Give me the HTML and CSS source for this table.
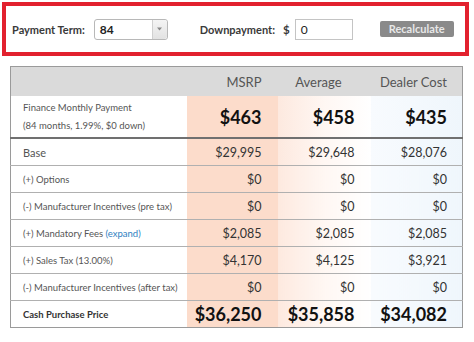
FILE: index.html
```html
<!DOCTYPE html>
<html>
<head>
<meta charset="utf-8">
<link rel="stylesheet" href="styles.css">
</head>
<body>
<div class="controls">
  <span class="ctl-label">Payment Term:</span>
  <div class="select">
    <span class="select-value">84</span>
    <span class="select-arrow"><svg width="5" height="4" viewBox="0 0 5 4"><path d="M0 0.5H5L2.5 3.5Z" fill="#888"/></svg></span>
  </div>
  <span class="ctl-label dp-label">Downpayment:</span>
  <span class="dollar">$</span>
  <div class="text-input">0</div>
  <button class="btn">Recalculate</button>
</div>

<table class="price-table">
  <colgroup>
    <col class="c-label"><col class="c-msrp"><col class="c-avg"><col class="c-dealer">
  </colgroup>
  <thead>
    <tr>
      <th></th>
      <th class="h-msrp">MSRP</th>
      <th class="h-avg">Average</th>
      <th class="h-dealer">Dealer Cost</th>
    </tr>
  </thead>
  <tbody>
    <tr class="finance">
      <td class="label">Finance Monthly Payment<br>(84 months, 1.99%, $0 down)</td>
      <td class="msrp big">$463</td>
      <td class="avg big">$458</td>
      <td class="dealer big">$435</td>
    </tr>
    <tr>
      <td class="label base">Base</td>
      <td class="msrp">$29,995</td>
      <td class="avg">$29,648</td>
      <td class="dealer">$28,076</td>
    </tr>
    <tr>
      <td class="label">(+) Options</td>
      <td class="msrp">$0</td>
      <td class="avg">$0</td>
      <td class="dealer">$0</td>
    </tr>
    <tr>
      <td class="label">(-) Manufacturer Incentives (pre tax)</td>
      <td class="msrp">$0</td>
      <td class="avg">$0</td>
      <td class="dealer">$0</td>
    </tr>
    <tr>
      <td class="label">(+) Mandatory Fees <a class="expand">(expand)</a></td>
      <td class="msrp">$2,085</td>
      <td class="avg">$2,085</td>
      <td class="dealer">$2,085</td>
    </tr>
    <tr>
      <td class="label">(+) Sales Tax (13.00%)</td>
      <td class="msrp">$4,170</td>
      <td class="avg">$4,125</td>
      <td class="dealer">$3,921</td>
    </tr>
    <tr>
      <td class="label">(-) Manufacturer Incentives (after tax)</td>
      <td class="msrp">$0</td>
      <td class="avg">$0</td>
      <td class="dealer">$0</td>
    </tr>
    <tr class="total">
      <td class="label strong">Cash Purchase Price</td>
      <td class="msrp big">$36,250</td>
      <td class="avg big">$35,858</td>
      <td class="dealer big">$34,082</td>
    </tr>
  </tbody>
</table>
</body>
</html>
```

FILE: styles.css
```css
html, body {
  margin: 0;
  padding: 0;
  background: #fff;
  font-family: Lato, "Open Sans", sans-serif;
}

.controls {
  margin: 2px 5px 0 2px;
  height: 46px;
  border: 4px solid #e2212e;
  display: flex;
  align-items: center;
  padding-left: 6px;
}

.ctl-label {
  font-size: 11px;
  font-weight: 700;
  color: #3a3a3a;
  white-space: nowrap;
  flex-shrink: 0;
}

.select {
  margin-left: 9px;
  width: 72px;
  height: 19px;
  border: 1px solid #b8b8b8;
  border-radius: 3px;
  display: flex;
  background: #fff;
  flex-shrink: 0;
}

.select-value {
  flex: 1;
  font-size: 12px;
  font-weight: 700;
  color: #222;
  padding-left: 5px;
  line-height: 19px;
}

.select-arrow {
  width: 14px;
  border-left: 1px solid #d0d0d0;
  background: linear-gradient(#f4f4f4, #e2e2e2);
  border-radius: 0 3px 3px 0;
  display: flex;
  align-items: center;
  justify-content: center;
}

.dp-label {
  margin-left: 32px;
}

.dollar {
  margin-left: 8px;
  font-size: 11.5px;
  font-weight: 700;
  color: #3a3a3a;
}

.text-input {
  margin-left: 5px;
  width: 51px;
  height: 19px;
  border: 1px solid #c4c4c4;
  font-size: 12px;
  color: #222;
  line-height: 19px;
  padding-left: 5px;
  flex-shrink: 0;
}

.btn {
  margin-left: 27px;
  width: 74px;
  height: 16px;
  border: none;
  border-radius: 2px;
  background: #8a8a8a;
  color: #e8e8e8;
  font-family: Lato, sans-serif;
  font-size: 11px;
  font-weight: 700;
  padding: 0;
  line-height: 16px;
  flex-shrink: 0;
}

.price-table {
  margin: 10px 0 0 10px;
  width: 452px;
  border-collapse: collapse;
  table-layout: fixed;
  border: 1px solid #9a9a9a;
}

.c-label { width: 176px; }
.c-msrp { width: 91px; }
.c-avg { width: 93px; }
.c-dealer { width: 92px; }

.price-table th {
  background: #dadada;
  height: 29px;
  padding: 0 16px 0 0;
  text-align: right;
  font-size: 13px;
  font-weight: 400;
  color: #555;
}

.price-table th.h-avg {
  padding-right: 29px;
}

.price-table th.h-dealer {
  padding-right: 15px;
}

.price-table td {
  border-top: 1px solid #b0b0b0;
  height: 26px;
  padding: 0 16px 0 0;
  text-align: right;
  font-size: 12.5px;
  color: #333;
}

.price-table td.dealer {
  padding-right: 15px;
}

.price-table td.label {
  text-align: left;
  padding: 0 0 0 12px;
  font-size: 9.5px;
  color: #555;
  white-space: nowrap;
}

.price-table td.base {
  font-size: 11px;
}

.price-table tr.finance td {
  height: 41px;
  border-top: none;
  border-bottom: 2px solid #707070;
}

.price-table tr.finance td.label {
  line-height: 18px;
}

.price-table td.strong {
  font-weight: 700;
  color: #333;
}

.price-table td.big {
  font-size: 18px;
  font-weight: 700;
  color: #111;
}

.msrp {
  background: #fcdccb;
}

.avg {
  background: linear-gradient(90deg, #fde9df 0%, #fff7f3 50%, #ffffff 100%);
}

.dealer {
  background: linear-gradient(90deg, #f8fbfe 0%, #eff6fc 100%);
}

.expand {
  color: #2f7fc1;
}
```
